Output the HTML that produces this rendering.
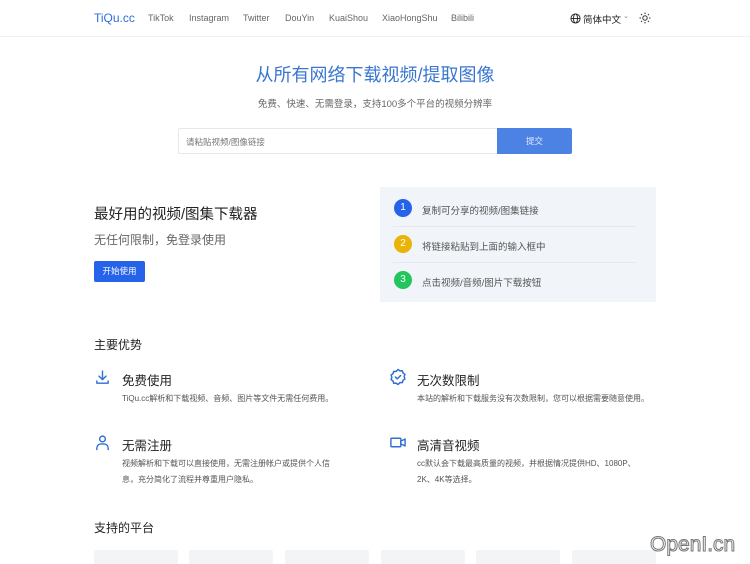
<!DOCTYPE html>
<html><head><meta charset="utf-8"><style>
*{margin:0;padding:0;box-sizing:border-box}
body{width:750px;height:562px;overflow:hidden;background:#fff;font-family:"Liberation Sans","Noto Sans CJK SC",sans-serif;position:relative;color:#222}
.a{position:absolute;white-space:nowrap}
.nav{position:absolute;left:0;top:0;width:750px;height:37px;border-bottom:1px solid #eef0f3}
.nl{font-size:9px;color:#666;top:13px}
.circ{position:absolute;width:18px;height:18px;border-radius:50%;color:#fff;font-size:10px;text-align:center;line-height:18px}
.st{font-size:9.5px;color:#555}
.ft{font-size:12.5px;color:#222}
.fd{font-size:8px;color:#555;line-height:16px;white-space:normal}
.card{position:absolute;top:550px;width:84px;height:14px;background:#f3f4f6;border-radius:2px}
</style></head><body>
<div class="nav"></div>
<div class="a" style="left:94px;top:11px;font-size:12px;color:#2f6fd6">TiQu.cc</div>
<div class="a nl" style="left:148px">TikTok</div>
<div class="a nl" style="left:189px">Instagram</div>
<div class="a nl" style="left:243px">Twitter</div>
<div class="a nl" style="left:285px">DouYin</div>
<div class="a nl" style="left:329px">KuaiShou</div>
<div class="a nl" style="left:382px">XiaoHongShu</div>
<div class="a nl" style="left:451px">Bilibili</div>
<svg class="a" style="left:570px;top:13px" width="11" height="11" viewBox="0 0 12 12" fill="none" stroke="#222" stroke-width="1"><circle cx="6" cy="6" r="5"/><ellipse cx="6" cy="6" rx="2.2" ry="5"/><path d="M1 6h10"/></svg>
<div class="a" style="left:583px;top:12px;font-size:9.5px;color:#222">简体中文</div>
<div class="a" style="left:623px;top:12px;font-size:7px;color:#888">⌄</div>
<svg class="a" style="left:639px;top:12px" width="12" height="12" viewBox="0 0 12 12" fill="none" stroke="#333" stroke-width="1"><circle cx="6" cy="6" r="2.2"/><path d="M6 .5v1.5M6 10v1.5M.5 6H2M10 6h1.5M2.1 2.1l1 1M8.9 8.9l1 1M2.1 9.9l1-1M8.9 3.1l1-1"/></svg>

<div class="a" style="left:0;width:750px;text-align:center;top:61px;font-size:18px;color:#3a76d0">从所有网络下载视频/提取图像</div>
<div class="a" style="left:0;width:750px;text-align:center;top:96px;font-size:9.5px;color:#666">免费、快速、无需登录，支持100多个平台的视频分辨率</div>
<div class="a" style="left:178px;top:128px;width:320px;height:26px;border:1px solid #e6e8eb;border-right:none;border-radius:2px 0 0 2px"></div>
<div class="a" style="left:186px;top:136px;font-size:8.5px;color:#777">请粘贴视频/图像链接</div>
<div class="a" style="left:497px;top:128px;width:75px;height:26px;background:#4b82e3;border-radius:0 2px 2px 0;color:#dfe9fb;font-size:8.5px;text-align:center;line-height:26px">提交</div>

<div class="a" style="left:94px;top:203px;font-size:14.5px;color:#222">最好用的视频/图集下载器</div>
<div class="a" style="left:94px;top:231px;font-size:12px;color:#666">无任何限制，免登录使用</div>
<div class="a" style="left:94px;top:261px;width:51px;height:21px;background:#2563eb;border-radius:2px;color:#fff;font-size:8.5px;text-align:center;line-height:21px">开始使用</div>

<div class="a" style="left:380px;top:187px;width:276px;height:115px;background:#f1f4f9"></div>
<div class="a" style="left:393px;top:226px;width:243px;border-top:1px solid #e5e8ee"></div>
<div class="a" style="left:393px;top:262px;width:243px;border-top:1px solid #e5e8ee"></div>
<div class="circ" style="left:394px;top:199px;background:#2563eb">1</div>
<div class="a st" style="left:422px;top:203px">复制可分享的视频/图集链接</div>
<div class="circ" style="left:394px;top:235px;background:#eab308">2</div>
<div class="a st" style="left:422px;top:239px">将链接粘贴到上面的输入框中</div>
<div class="circ" style="left:394px;top:271px;background:#22c55e">3</div>
<div class="a st" style="left:422px;top:275px">点击视频/音频/图片下载按钮</div>

<div class="a" style="left:94px;top:336px;font-size:12px;color:#222">主要优势</div>

<svg class="a" style="left:94px;top:369px" width="17" height="17" viewBox="0 0 24 24" fill="none" stroke="#2f6fd6" stroke-width="2" stroke-linecap="round" stroke-linejoin="round"><path d="M12 3v12M7 10l5 5 5-5M4 17v3h16v-3"/></svg>
<div class="a ft" style="left:122px;top:370px">免费使用</div>
<div class="a fd" style="left:122px;top:391px">TiQu.cc解析和下载视频、音频、图片等文件无需任何费用。</div>
<svg class="a" style="left:389px;top:368px" width="18" height="18" viewBox="0 0 24 24" fill="none" stroke="#2f6fd6" stroke-width="2" stroke-linecap="round" stroke-linejoin="round"><path d="M12 2l2.6 1.8 3.1-.1 1 3 2.5 1.9-1 3 1 3-2.5 1.9-1 3-3.1-.1L12 22l-2.6-1.8-3.1.1-1-3-2.5-1.9 1-3-1-3 2.5-1.9 1-3 3.1.1z"/><path d="M8.5 12l2.5 2.5 4.5-4.5"/></svg>
<div class="a ft" style="left:417px;top:370px">无次数限制</div>
<div class="a fd" style="left:417px;top:391px">本站的解析和下载服务没有次数限制，您可以根据需要随意使用。</div>

<svg class="a" style="left:94px;top:434px" width="17" height="17" viewBox="0 0 24 24" fill="none" stroke="#2f6fd6" stroke-width="2" stroke-linecap="round"><circle cx="12" cy="7" r="4"/><path d="M4 22v-2a6 6 0 0 1 6-6h4a6 6 0 0 1 6 6v2"/></svg>
<div class="a ft" style="left:122px;top:435px">无需注册</div>
<div class="a fd" style="left:122px;top:456px;width:222px">视频解析和下载可以直接使用，无需注册帐户或提供个人信息，充分简化了流程并尊重用户隐私。</div>
<svg class="a" style="left:389px;top:434px" width="18" height="17" viewBox="0 0 24 24" fill="none" stroke="#2f6fd6" stroke-width="2" stroke-linejoin="round"><rect x="2" y="6" width="14" height="12" rx="1"/><path d="M16 10l6-3v10l-6-3z"/></svg>
<div class="a ft" style="left:417px;top:435px">高清音视频</div>
<div class="a fd" style="left:417px;top:456px;width:235px">cc默认会下载最高质量的视频，并根据情况提供HD、1080P、2K、4K等选择。</div>

<div class="a" style="left:94px;top:519px;font-size:12px;color:#222">支持的平台</div>
<div class="card" style="left:94px"></div>
<div class="card" style="left:189px"></div>
<div class="card" style="left:285px"></div>
<div class="card" style="left:381px"></div>
<div class="card" style="left:476px"></div>
<div class="card" style="left:572px"></div>
<div class="a" style="left:650px;top:533px;font-size:21px;color:#fff;-webkit-text-stroke:1px #777;font-family:'Liberation Sans',sans-serif">OpenI.cn</div>
</body></html>
